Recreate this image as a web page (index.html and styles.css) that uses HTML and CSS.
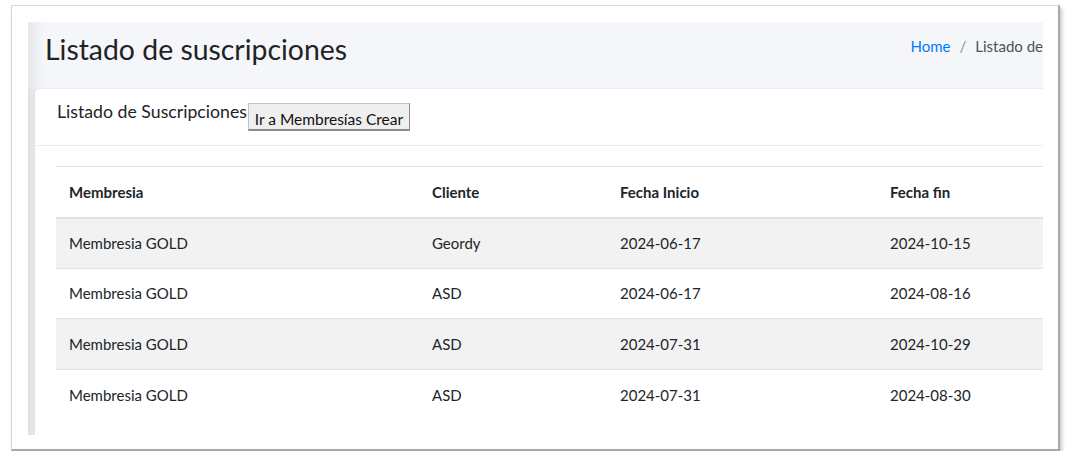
FILE: index.html
```html
<!DOCTYPE html>
<html lang="es">
<head>
<meta charset="utf-8">
<title>Listado de suscripciones</title>
<link rel="stylesheet" href="styles.css">
</head>
<body>
<div class="frame">
  <div class="wrapper">
    <div class="content-header">
      <h1 class="title">Listado de suscripciones</h1>
      <ol class="breadcrumb">
        <li><a href="#" class="crumb-link">Home</a></li>
        <li class="sep">/</li>
        <li class="crumb-active">Listado de</li>
      </ol>
    </div>
    <div class="content">
      <div class="card">
        <div class="card-header">
          <span class="card-title">Listado de Suscripciones</span>
          <button class="btn" type="button">Ir a Membresías Crear</button>
        </div>
        <div class="card-body">
          <table class="table">
            <colgroup>
              <col class="c1"><col class="c2"><col class="c3"><col class="c4">
            </colgroup>
            <thead>
              <tr><th>Membresia</th><th>Cliente</th><th>Fecha Inicio</th><th>Fecha fin</th></tr>
            </thead>
            <tbody>
              <tr class="odd"><td>Membresia GOLD</td><td>Geordy</td><td>2024-06-17</td><td>2024-10-15</td></tr>
              <tr><td>Membresia GOLD</td><td>ASD</td><td>2024-06-17</td><td>2024-08-16</td></tr>
              <tr class="odd"><td>Membresia GOLD</td><td>ASD</td><td>2024-07-31</td><td>2024-10-29</td></tr>
              <tr><td>Membresia GOLD</td><td>ASD</td><td>2024-07-31</td><td>2024-08-30</td></tr>
            </tbody>
          </table>
        </div>
      </div>
    </div>
  </div>
</div>
</body>
</html>
```

FILE: styles.css
```css
* { box-sizing: border-box; }
html, body { margin: 0; padding: 0; background: #ffffff; }
body {
  font-family: Lato, "Noto Sans", "Liberation Sans", sans-serif;
  color: #212529;
}
.frame {
  margin: 5px 0 0 11px;
  width: 1049px;
  height: 446px;
  background: #fff;
  border: 1px solid #d6d6d6;
  border-right: 2px solid #a8a8a8;
  border-bottom: 2px solid #a8a8a8;
  box-shadow: 2px 3px 4px rgba(0,0,0,0.22);
  padding: 16px 14px 13px 16px;
}
.wrapper {
  width: 1015px;
  height: 413px;
  overflow: hidden;
  background: #e9ebee;
  display: flex;
  flex-direction: column;
}
.content-header {
  height: 67px;
  flex: 0 0 67px;
  background: linear-gradient(to right, #e6e8ec 0px, #f4f6f9 16px, #f4f6f9 100%);
  display: flex;
  justify-content: space-between;
  align-items: flex-start;
  padding: 0 0 0 17px;
  white-space: nowrap;
}
.title {
  margin: 11px 0 0 0;
  font-size: 28.4px;
  font-weight: 400;
  line-height: 32px;
  color: #1f2326;
}
.breadcrumb {
  list-style: none;
  display: flex;
  margin: 14px 0 0 0;
  padding: 0;
  font-size: 15px;
  line-height: 20px;
  gap: 9px;
}
.crumb-link { color: #007bff; text-decoration: none; }
.sep { color: #8a9096; }
.crumb-active { color: #4b5258; }
.content {
  flex: 1;
  padding-left: 7px;
  background: linear-gradient(to right, #dfe1e5 0px, #e7e9ec 7px);
}
.card {
  background: #fff;
  height: 100%;
  border-top-left-radius: 4px;
  box-shadow: 0 0 2px rgba(0,0,0,0.12);
}
.card-header {
  height: 57px;
  border-bottom: 1px solid #ececec;
  display: flex;
  align-items: flex-start;
  padding: 12px 0 0 22px;
  white-space: nowrap;
}
.card-title {
  font-size: 17.7px;
  line-height: 22px;
  color: #1f2326;
}
.btn {
  margin: 2px 0 0 1px;
  height: 28px;
  width: 162px;
  padding: 4px 0 0 0;
  font-family: Lato, "Noto Sans", sans-serif;
  font-size: 15.5px;
  color: #111;
  background: #efefef;
  border: 1px solid #c3c3c3;
  border-right-color: #8c8c8c;
  border-bottom: 2px solid #8c8c8c;
  border-radius: 0;
}
.card-body {
  padding: 20px 0 0 21px;
}
.table {
  border-collapse: collapse;
  table-layout: fixed;
  width: 1100px;
  font-size: 15px;
  color: #212529;
}
.c1 { width: 363px; }
.c2 { width: 188px; }
.c3 { width: 270px; }
.c4 { width: 279px; }
.table th, .table td {
  text-align: left;
  padding: 0 13px;
  height: 51px;
  border-top: 1px solid #dee2e6;
  white-space: nowrap;
}
.table th {
  font-weight: 700;
  border-bottom: 2px solid #dee2e6;
  height: 51px;
}
.table tbody tr:first-child td { border-top: 0; }
.table td { height: 50.5px; }
.odd td { background: #f2f2f2; }
```
